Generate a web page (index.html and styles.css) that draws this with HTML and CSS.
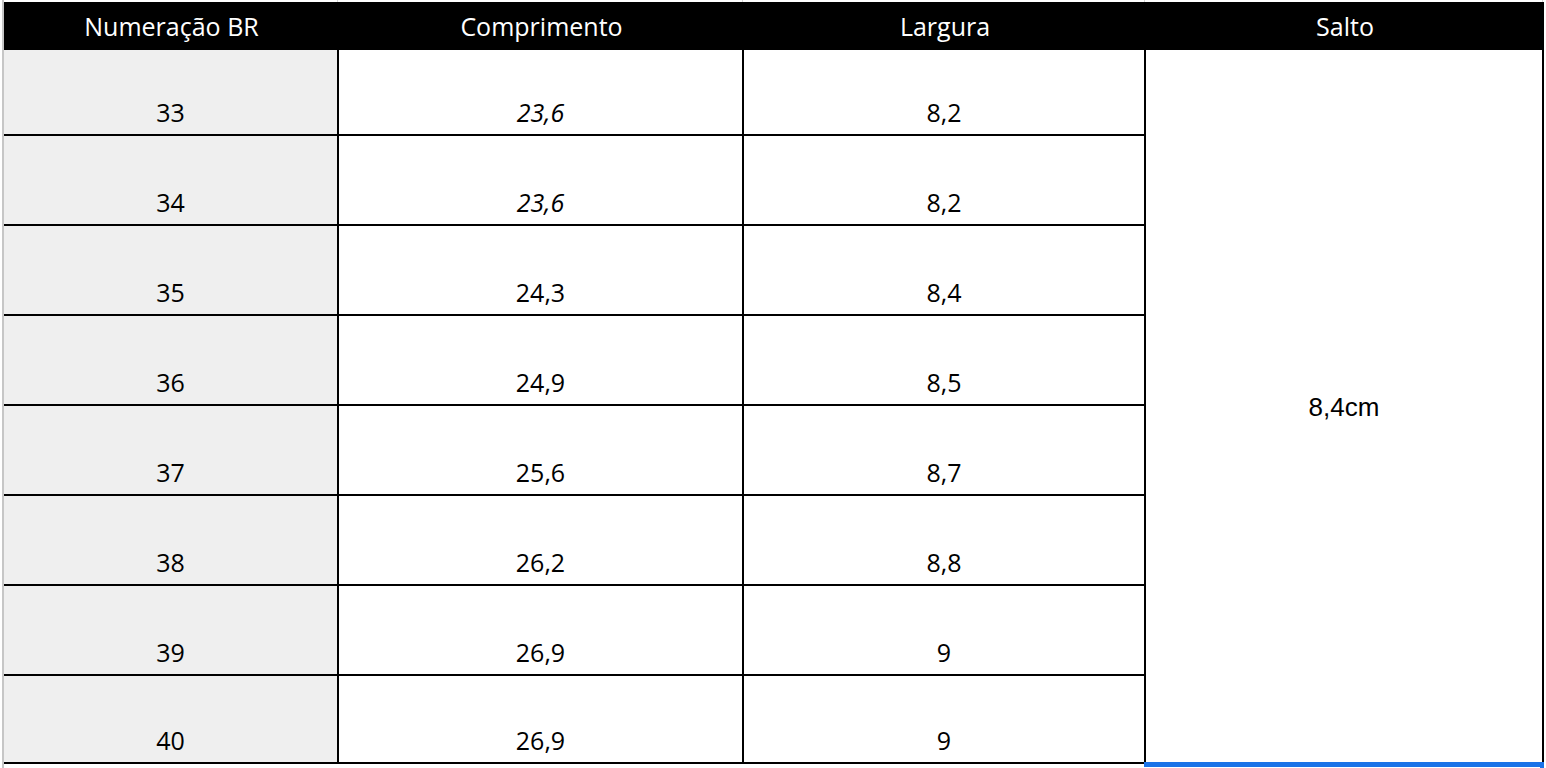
FILE: index.html
```html
<!DOCTYPE html>
<html lang="pt-BR">
<head>
<meta charset="utf-8">
<title>Tabela de medidas</title>
<link rel="stylesheet" href="styles.css">
</head>
<body>
<div class="page">
  <div class="topgrid">
    <span></span><span></span><span></span><span></span>
  </div>
  <div class="sheet">
    <div class="cell head">Numeração BR</div>
    <div class="cell head">Comprimento</div>
    <div class="cell head">Largura</div>
    <div class="cell head">Salto</div>

    <div class="cell size">33</div>
    <div class="cell"><em>23,6</em></div>
    <div class="cell">8,2</div>
    <div class="cell salto">8,4cm</div>

    <div class="cell size">34</div>
    <div class="cell"><em>23,6</em></div>
    <div class="cell">8,2</div>

    <div class="cell size">35</div>
    <div class="cell">24,3</div>
    <div class="cell">8,4</div>

    <div class="cell size">36</div>
    <div class="cell">24,9</div>
    <div class="cell">8,5</div>

    <div class="cell size">37</div>
    <div class="cell">25,6</div>
    <div class="cell">8,7</div>

    <div class="cell size">38</div>
    <div class="cell">26,2</div>
    <div class="cell">8,8</div>

    <div class="cell size">39</div>
    <div class="cell">26,9</div>
    <div class="cell">9</div>

    <div class="cell size">40</div>
    <div class="cell">26,9</div>
    <div class="cell">9</div>
  </div>
</div>
</body>
</html>
```
FILE: styles.css
```css
* {
  box-sizing: border-box;
}

html, body {
  margin: 0;
  padding: 0;
  background: #ffffff;
}

body {
  font-family: "Open Sans", "Noto Sans", sans-serif;
  color: #000000;
  overflow: hidden;
}

.page {
  margin-left: 2px;
  border-left: 2px solid #c6c6c6;
  width: 1544px;
  height: 768px;
}

.topgrid {
  display: grid;
  grid-template-columns: 335px 405px 402px 398px;
  height: 2px;
}

.topgrid span {
  border-right: 1px solid #d6d6d6;
  margin-right: 1px;
}

.sheet {
  display: grid;
  grid-template-columns: 335px 405px 402px 398px;
  grid-template-rows: 48px 86px repeat(6, 90px) 88px;
}

.cell {
  display: flex;
  align-items: flex-end;
  justify-content: center;
  font-size: 25px;
  line-height: 30px;
  padding-bottom: 7px;
  border-right: 2px solid #000000;
  border-bottom: 2px solid #000000;
}

.cell em {
  font-style: italic;
}

.size {
  background: #efefef;
}

.head {
  background: #000000;
  color: #ffffff;
  align-items: center;
  padding-bottom: 0;
  border-bottom: none;
  border-right: none;
}

.salto {
  grid-column: 4;
  grid-row: 2 / span 8;
  align-items: center;
  padding-bottom: 0;
  border-bottom: none;
  font-family: "Liberation Sans", Arial, sans-serif;
  font-size: 26px;
  line-height: 30px;
  position: relative;
}

.salto::after {
  content: "";
  position: absolute;
  left: -2px;
  right: -1px;
  bottom: -3px;
  height: 5px;
  background: #1a73e8;
}

.salto::before {
  content: "";
  position: absolute;
  right: -2px;
  bottom: -4px;
  width: 4px;
  height: 6px;
  background: #1a73e8;
}
```
